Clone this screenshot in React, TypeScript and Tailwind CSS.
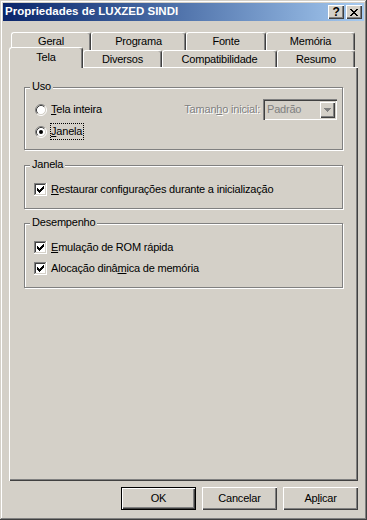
import { FC, ReactNode } from "react";

const raised =
  "shadow-[inset_1px_1px_#fff,inset_-1px_-1px_#404040,inset_-2px_-2px_#808080]";

const CheckBox: FC = () => {
  const starts = [2, 3, 4, 3, 2, 1, 0];
  return (
    <svg width="13" height="13" viewBox="0 0 13 13" shapeRendering="crispEdges" className="shrink-0">
      <rect width="13" height="13" fill="#fff" />
      <rect width="12" height="1" fill="#808080" />
      <rect width="1" height="12" fill="#808080" />
      <rect x="1" y="1" width="10" height="1" fill="#404040" />
      <rect x="1" y="1" width="1" height="10" fill="#404040" />
      <rect x="1" y="11" width="11" height="1" fill="#d4d0c8" />
      <rect x="11" y="1" width="1" height="11" fill="#d4d0c8" />
      {starts.map((s, i) => (
        <rect key={i} x={3 + i} y={3 + s} width="1" height="3" fill="#000" />
      ))}
    </svg>
  );
};

const Radio: FC<{ checked?: boolean }> = ({ checked }) => (
  <svg width="12" height="12" viewBox="0 0 12 12" className="shrink-0">
    <circle cx="6" cy="6" r="4.5" fill="#fff" />
    <path d="M2.11 9.89A5.5 5.5 0 0 1 9.89 2.11" fill="none" stroke="#808080" />
    <path d="M9.89 2.11A5.5 5.5 0 0 1 2.11 9.89" fill="none" stroke="#fff" />
    <path d="M2.82 9.18A4.5 4.5 0 0 1 9.18 2.82" fill="none" stroke="#404040" />
    <path d="M9.18 2.82A4.5 4.5 0 0 1 2.82 9.18" fill="none" stroke="#d4d0c8" />
    {checked && <circle cx="6" cy="6" r="2" fill="#000" />}
  </svg>
);

const Tab: FC<{ label: string; className: string }> = ({ label, className }) => (
  <div
    className={`flex items-center justify-center border-l border-t border-white border-r border-r-[#404040] rounded-t-[3px] shadow-[inset_-1px_0_#808080] ${className}`}
  >
    {label}
  </div>
);

const Group: FC<{ label: string; className: string; children: ReactNode }> = ({
  label,
  className,
  children,
}) => (
  <div
    className={`relative w-[319px] border border-[#808080] shadow-[1px_1px_#fff,inset_1px_1px_#fff] ${className}`}
  >
    <span className="absolute left-[5px] -top-[8px] px-[2px] bg-[#d4d0c8] leading-[13px]">{label}</span>
    {children}
  </div>
);

const Button: FC<{ children: ReactNode; primary?: boolean }> = ({ children, primary }) => (
  <div
    className={`w-[75px] h-[23px] flex items-center justify-center ${
      primary ? "border border-black" : ""
    }`}
  >
    <div className={`w-full h-full flex items-center justify-center ${raised}`}>{children}</div>
  </div>
);

export default function App() {
  return (
    <div className="w-[367px] h-[520px] bg-[#d4d0c8] p-[3px] flex flex-col text-[11px] tracking-[-0.2px] text-black font-['Liberation_Sans',Arial,sans-serif] shadow-[inset_-1px_-1px_#404040,inset_1px_1px_#d4d0c8,inset_-2px_-2px_#808080,inset_2px_2px_#fff]">
      {/* title bar */}
      <div className="h-[18px] flex items-center bg-linear-to-r from-[#0a246a] to-[#a6caf0] pl-[2px] pr-[2px]">
        <span className="text-white font-bold text-[11.5px] tracking-normal">Propriedades de LUXZED SINDI</span>
        <div className="ml-auto flex gap-[2px]">
          <div className={`w-[16px] h-[14px] bg-[#d4d0c8] flex items-center justify-center font-bold text-[12px] leading-none pb-px ${raised}`}>
            ?
          </div>
          <div className={`w-[16px] h-[14px] bg-[#d4d0c8] flex items-center justify-center ${raised}`}>
            <svg width="8" height="7" viewBox="0 0 8 7" shapeRendering="crispEdges">
              <path
                d="M0 0h2v1h-2zM6 0h2v1h-2zM1 1h2v1h-2zM5 1h2v1h-2zM2 2h4v1h-4zM3 3h2v1h-2zM2 4h4v1h-4zM1 5h2v1h-2zM5 5h2v1h-2zM0 6h2v1h-2zM6 6h2v1h-2z"
                fill="#000"
              />
            </svg>
          </div>
        </div>
      </div>

      <div className="flex-1 flex flex-col px-[6px] pt-[11px]">
        {/* tabs */}
        <div className="flex h-[18px] pl-[2px]">
          <Tab label="Geral" className="w-[80px]" />
          <Tab label="Programa" className="w-[95px]" />
          <Tab label="Fonte" className="w-[80px]" />
          <Tab label="Memória" className="w-[89px]" />
        </div>
        <div className="flex h-[17px]">
          <Tab label="Tela" className="w-[74px] h-[21px] -mt-[3px] pb-[2px] relative z-10 bg-[#d4d0c8]" />
          <Tab label="Diversos" className="w-[79px] h-[17px]" />
          <Tab label="Compatibilidade" className="w-[115px] h-[17px]" />
          <Tab label="Resumo" className="w-[78px] h-[17px]" />
        </div>

        {/* panel */}
        <div className="w-[349px] h-[414px] pt-[20px] pl-[15px] flex flex-col shadow-[inset_1px_1px_#fff,inset_-1px_-1px_#404040,inset_-2px_-2px_#808080]">
          <Group label="Uso" className="h-[63px] pt-[11px] pl-[10px] pr-[5px]">
            <div className="flex items-center h-[21px]">
              <Radio />
              <span className="ml-[4px]">
                <u>T</u>ela inteira
              </span>
              <div className="ml-auto flex items-center gap-[3px]">
                <span className="text-[#808080] [text-shadow:1px_1px_#fff]">
                  Taman<u>h</u>o inicial:
                </span>
                <div className="w-[74px] h-[21px] flex items-center pl-[4px] pr-[2px] text-[#808080] shadow-[inset_1px_1px_#808080,inset_2px_2px_#404040,inset_-1px_-1px_#fff,inset_-2px_-2px_#d4d0c8]">
                  Padrão
                  <div className="ml-auto w-[16px] h-[17px] flex items-center justify-center shadow-[inset_1px_1px_#d4d0c8,inset_2px_2px_#fff,inset_-1px_-1px_#404040,inset_-2px_-2px_#808080]">
                    <svg width="7" height="4" viewBox="0 0 7 4" shapeRendering="crispEdges">
                      <path d="M0 0h7v1h-1v1h-1v1h-1v1h-1v-1h-1v-1h-1v-1h-1z" fill="#808080" />
                    </svg>
                  </div>
                </div>
              </div>
            </div>
            <div className="flex items-center h-[17px] mt-[3px]">
              <Radio checked />
              <span className="ml-[3px] pr-px py-px leading-[13px] border border-dotted border-black">
                <u>J</u>anela
              </span>
            </div>
          </Group>

          <Group label="Janela" className="h-[44px] mt-[15px] pt-[17px] pl-[9px]">
            <div className="flex items-center h-[13px] gap-[4px]">
              <CheckBox />
              <span>
                <u>R</u>estaurar configurações durante a inicialização
              </span>
            </div>
          </Group>

          <Group label="Desempenho" className="h-[65px] mt-[14px] pt-[17px] pl-[9px] flex flex-col gap-[8px]">
            <div className="flex items-center h-[13px] gap-[4px]">
              <CheckBox />
              <span>
                <u>E</u>mulação de ROM rápida
              </span>
            </div>
            <div className="flex items-center h-[13px] gap-[4px]">
              <CheckBox />
              <span>
                Alocação dinâ<u>m</u>ica de memória
              </span>
            </div>
          </Group>
        </div>

        {/* buttons */}
        <div className="w-[349px] mt-[6px] flex justify-end gap-[6px]">
          <Button primary>OK</Button>
          <Button>Cancelar</Button>
          <Button>
            <span>
              Ap<u>l</u>icar
            </span>
          </Button>
        </div>
      </div>
    </div>
  );
}
